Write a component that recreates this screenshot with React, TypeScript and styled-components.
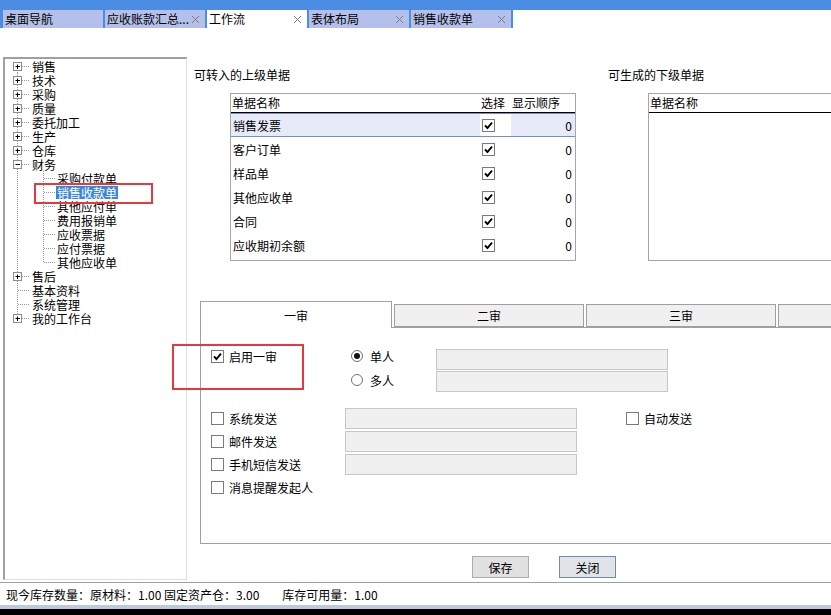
import React from 'react'
import styled, { createGlobalStyle } from 'styled-components'

const GlobalStyle = createGlobalStyle`
	html, body {
		margin: 0;
		padding: 0;
		background: #fff;
	}
	body {
		font-family: 'Noto Sans CJK SC', 'Noto Sans', sans-serif;
		font-size: 12px;
		color: #000;
	}
	* {
		box-sizing: border-box;
	}
`

type TreeItem = {
	label: string
	level: 0 | 1
	box?: 'plus' | 'minus'
	first?: boolean
	last?: boolean
	selected?: boolean
}

const treeItems: TreeItem[] = [
	{ label: '销售', level: 0, box: 'plus', first: true },
	{ label: '技术', level: 0, box: 'plus' },
	{ label: '采购', level: 0, box: 'plus' },
	{ label: '质量', level: 0, box: 'plus' },
	{ label: '委托加工', level: 0, box: 'plus' },
	{ label: '生产', level: 0, box: 'plus' },
	{ label: '仓库', level: 0, box: 'plus' },
	{ label: '财务', level: 0, box: 'minus' },
	{ label: '采购付款单', level: 1, first: true },
	{ label: '销售收款单', level: 1, selected: true },
	{ label: '其他应付单', level: 1 },
	{ label: '费用报销单', level: 1 },
	{ label: '应收票据', level: 1 },
	{ label: '应付票据', level: 1 },
	{ label: '其他应收单', level: 1, last: true },
	{ label: '售后', level: 0, box: 'plus' },
	{ label: '基本资料', level: 0 },
	{ label: '系统管理', level: 0 },
	{ label: '我的工作台', level: 0, box: 'plus', last: true },
]

const upstreamDocs = ['销售发票', '客户订单', '样品单', '其他应收单', '合同', '应收期初余额']

const docTabs = [
	{ label: '桌面导航', closable: false },
	{ label: '应收账款汇总...', closable: true },
	{ label: '工作流', closable: true, active: true },
	{ label: '表体布局', closable: true },
	{ label: '销售收款单', closable: true },
]

const DOT = '#9a9a9a'

const TreeGutter = ({ item }: { item: TreeItem }) => {
	if (item.level === 0) {
		return (
			<svg width="26" height="14" viewBox="0 0 26 14" style={{ flexShrink: 0 }}>
				<line
					x1="12.5"
					x2="12.5"
					y1={item.first ? 7 : 0}
					y2={item.last ? 7.5 : 14}
					stroke={DOT}
					strokeDasharray="1 1"
				/>
				<line x1="13" x2="25" y1="7.5" y2="7.5" stroke={DOT} strokeDasharray="1 1" />
				{item.box && (
					<g>
						<rect x="8.5" y="3.5" width="8" height="8" fill="#fff" stroke="#8c8c8c" />
						<line x1="10.5" x2="15" y1="7.5" y2="7.5" stroke="#000" />
						{item.box === 'plus' && <line x1="12.5" x2="12.5" y1="5.5" y2="10" stroke="#000" />}
					</g>
				)}
			</svg>
		)
	}
	return (
		<svg width="51" height="14" viewBox="0 0 51 14" style={{ flexShrink: 0 }}>
			<line x1="12.5" x2="12.5" y1="0" y2="14" stroke={DOT} strokeDasharray="1 1" />
			<line
				x1="38.5"
				x2="38.5"
				y1="0"
				y2={item.last ? 7.5 : 14}
				stroke={DOT}
				strokeDasharray="1 1"
			/>
			<line x1="39" x2="50" y1="7.5" y2="7.5" stroke={DOT} strokeDasharray="1 1" />
		</svg>
	)
}

const CheckMark = () => (
	<svg width="11" height="11" viewBox="0 0 11 11">
		<path d="M2 5.4 L4.4 8 L9 2.6" stroke="#000" strokeWidth="1.9" fill="none" />
	</svg>
)

const CloseGlyph = () => (
	<svg width="9" height="9" viewBox="0 0 9 9">
		<path d="M1 1 L8 8 M8 1 L1 8" stroke="#7c7c7c" strokeWidth="1" fill="none" />
	</svg>
)

const Check = ({ checked }: { checked?: boolean }) => <CheckBox>{checked && <CheckMark />}</CheckBox>

const App = () => {
	return (
		<Window>
			<GlobalStyle />
			<TopBar />
			<TabStrip>
				<TabTrack>
					{docTabs.map((t) => (
						<DocTab key={t.label} $active={!!t.active}>
							<span>{t.label}</span>
							{t.closable && <CloseGlyph />}
						</DocTab>
					))}
				</TabTrack>
			</TabStrip>

			<Body>
				<TreePanel>
					{treeItems.map((item) => (
						<TreeRow key={item.label}>
							<TreeGutter item={item} />
							<TreeLabel $selected={!!item.selected}>{item.label}</TreeLabel>
						</TreeRow>
					))}
				</TreePanel>

				<Main>
					<DocsRow>
						<DocSection $w={414}>
							<SectionTitle>可转入的上级单据</SectionTitle>
							<GridBox $w={346} $indent={36}>
								<HeadRow $cols="249px 31px 1fr">
									<HeadCell>单据名称</HeadCell>
									<HeadCell>选择</HeadCell>
									<HeadCell>显示顺序</HeadCell>
								</HeadRow>
								{upstreamDocs.map((name, i) => (
									<DataRow key={name} $cols="249px 31px 1fr" $selected={i === 0}>
										<Cell $tint={i === 0}>{name}</Cell>
										<Cell>
											<Check checked />
										</Cell>
										<Cell $tint={i === 0} $right>
											0
										</Cell>
									</DataRow>
								))}
							</GridBox>
						</DocSection>
						<DocSection $w={240}>
							<SectionTitle>可生成的下级单据</SectionTitle>
							<GridBox $w={200} $indent={40}>
								<HeadRow $cols="1fr">
									<HeadCell>单据名称</HeadCell>
								</HeadRow>
							</GridBox>
						</DocSection>
					</DocsRow>

					<TabControl>
						<TabList>
							<PageTab $active>一审</PageTab>
							<PageTab>二审</PageTab>
							<PageTab>三审</PageTab>
							<PageTab />
						</TabList>
						<TabPanel>
							<EnableBlock>
								<EnableCell>
									<Check checked />
									<span>启用一审</span>
								</EnableCell>
								<RadioGroup>
									<RadioItem>
										<RadioRing>
											<RadioDot />
										</RadioRing>
										<span>单人</span>
									</RadioItem>
									<RadioItem>
										<RadioRing />
										<span>多人</span>
									</RadioItem>
								</RadioGroup>
								<FieldStack>
									<Field $w={232} />
									<Field $w={232} />
								</FieldStack>
							</EnableBlock>

							<NotifyBlock>
								<NotifyRow>
									<CheckLabel>
										<Check />
										<span>系统发送</span>
									</CheckLabel>
									<Field $w={232} />
									<CheckLabel $gap={49}>
										<Check />
										<span>自动发送</span>
									</CheckLabel>
								</NotifyRow>
								<NotifyRow>
									<CheckLabel>
										<Check />
										<span>邮件发送</span>
									</CheckLabel>
									<Field $w={232} />
								</NotifyRow>
								<NotifyRow>
									<CheckLabel>
										<Check />
										<span>手机短信发送</span>
									</CheckLabel>
									<Field $w={232} />
								</NotifyRow>
								<NotifyRow>
									<CheckLabel>
										<Check />
										<span>消息提醒发起人</span>
									</CheckLabel>
								</NotifyRow>
							</NotifyBlock>
						</TabPanel>
					</TabControl>

					<ButtonRow>
						<PushButton>保存</PushButton>
						<PushButton $default>关闭</PushButton>
					</ButtonRow>
				</Main>
			</Body>

			<StatusBar>
				<span>现今库存数量：原材料：1.00 固定资产仓：3.00</span>
				<span>库存可用量：1.00</span>
			</StatusBar>
			<BottomStrip />
			<BlackBand />

			<Annotation $x={34} $y={183} $w={119} $h={21} />
			<Annotation $x={172} $y={344} $w={132} $h={46} />
		</Window>
	)
}

export default App

const Window = styled.div`
	position: relative;
	display: flex;
	flex-direction: column;
	width: 831px;
	height: 615px;
	overflow: hidden;
	background: #fff;
`

const TopBar = styled.div`
	height: 10px;
	flex-shrink: 0;
	background: #4a8de3;
`

const TabStrip = styled.div`
	display: flex;
	height: 18px;
	flex-shrink: 0;
`

const TabTrack = styled.div`
	display: flex;
	gap: 2px;
	padding: 0 2px 0 3px;
	background: #4a8de3;
`

const DocTab = styled.div<{ $active: boolean }>`
	display: flex;
	justify-content: space-between;
	align-items: center;
	width: 100px;
	height: 18px;
	padding: 0 5px 0 2px;

	background: ${(p) => (p.$active ? '#fff' : '#b5c0ea')};
	font-size: 12px;
	line-height: 18px;
	white-space: nowrap;
	overflow: hidden;
`

const Body = styled.div`
	display: flex;
	flex: 1;
	min-height: 0;
`

const TreePanel = styled.div`
	display: flex;
	flex-direction: column;
	flex-shrink: 0;
	width: 184px;
	margin: 29px 0 2px 3px;

	border-top: 2px solid #a0a0a0;
	border-left: 2px solid #a0a0a0;
	border-right: 1px solid #dedede;
	border-bottom: 1px solid #dedede;
	overflow: hidden;
`

const TreeRow = styled.div`
	display: flex;
	align-items: center;
	height: 14px;
	flex-shrink: 0;
`

const TreeLabel = styled.span<{ $selected: boolean }>`
	height: 13px;
	padding: 0 1px;
	line-height: 13px;
	white-space: nowrap;

	background: ${(p) => (p.$selected ? '#3a87da' : 'transparent')};
	color: ${(p) => (p.$selected ? '#fff' : '#000')};
`

const Main = styled.div`
	display: flex;
	flex-direction: column;
	flex: 1;
	min-width: 0;
	padding-left: 7px;
	overflow: hidden;
`

const DocsRow = styled.div`
	display: flex;
	margin-top: 40px;
`

const DocSection = styled.div<{ $w: number }>`
	display: flex;
	flex-direction: column;
	flex-shrink: 0;
	width: ${(p) => p.$w}px;
`

const SectionTitle = styled.div`
	height: 14px;
	line-height: 14px;
	white-space: nowrap;
`

const GridBox = styled.div<{ $w: number; $indent: number }>`
	display: flex;
	flex-direction: column;
	flex-shrink: 0;
	width: ${(p) => p.$w}px;
	height: 168px;
	margin: 11px 0 0 ${(p) => p.$indent}px;

	border: 1px solid #a6a6a6;
	background: #fff;
`

const HeadRow = styled.div<{ $cols: string }>`
	display: grid;
	grid-template-columns: ${(p) => p.$cols};
	height: 19px;
	flex-shrink: 0;
	border-bottom: 1px solid #000;
`

const HeadCell = styled.div`
	padding-left: 1px;
	line-height: 18px;
	white-space: nowrap;
`

const DataRow = styled.div<{ $cols: string; $selected: boolean }>`
	display: grid;
	grid-template-columns: ${(p) => p.$cols};
	height: 24px;
	flex-shrink: 0;
	box-shadow: ${(p) => (p.$selected ? 'inset 0 0 0 1px #6f92bf' : 'none')};
`

const Cell = styled.div<{ $tint?: boolean; $right?: boolean }>`
	display: flex;
	align-items: center;
	justify-content: ${(p) => (p.$right ? 'flex-end' : 'flex-start')};
	padding: ${(p) => (p.$right ? '0 3px 0 0' : '0 0 0 2px')};
	margin: 1px 0;

	background: ${(p) => (p.$tint ? '#e7ebf9' : 'transparent')};
	white-space: nowrap;
`

const CheckBox = styled.span`
	display: inline-flex;
	justify-content: center;
	align-items: center;
	flex-shrink: 0;
	width: 13px;
	height: 13px;

	border: 1px solid #7a7a7a;
	background: #fff;
`

const TabControl = styled.div`
	display: flex;
	flex-direction: column;
	flex-shrink: 0;
	width: 700px;
	margin: 40px 0 0 6px;
`

const TabList = styled.div`
	display: flex;
	align-items: flex-end;
	gap: 2px;
	height: 26px;
`

const PageTab = styled.div<{ $active?: boolean }>`
	display: flex;
	justify-content: center;
	align-items: center;
	flex-shrink: 0;
	width: ${(p) => (p.$active ? 192 : 190)}px;
	height: ${(p) => (p.$active ? 27 : 23)}px;
	margin-bottom: ${(p) => (p.$active ? -1 : 0)}px;
	position: relative;
	z-index: ${(p) => (p.$active ? 1 : 0)};

	border: 1px solid #a0a0a0;
	border-bottom: ${(p) => (p.$active ? 'none' : '1px solid #a0a0a0')};
	background: ${(p) => (p.$active ? '#fff' : '#f0f0f0')};
`

const TabPanel = styled.div`
	display: flex;
	flex-direction: column;
	height: 217px;
	padding: 16px 0 0 10px;
	border: 1px solid #a0a0a0;
	background: #fff;
`

const EnableBlock = styled.div`
	display: flex;
`

const EnableCell = styled.div`
	display: flex;
	align-items: center;
	gap: 5px;
	width: 140px;
	height: 24px;
`

const RadioGroup = styled.div`
	display: flex;
	flex-direction: column;
	width: 85px;
`

const RadioItem = styled.div`
	display: flex;
	align-items: center;
	gap: 7px;
	height: 24px;
`

const RadioRing = styled.span`
	display: inline-flex;
	justify-content: center;
	align-items: center;
	width: 12px;
	height: 12px;
	border: 1px solid #707070;
	border-radius: 50%;
	background: #fff;
`

const RadioDot = styled.span`
	width: 6px;
	height: 6px;
	border-radius: 50%;
	background: #111;
`

const FieldStack = styled.div`
	display: flex;
	flex-direction: column;
	gap: 1px;
	margin-top: 5px;
`

const Field = styled.div<{ $w: number }>`
	width: ${(p) => p.$w}px;
	height: 21px;
	flex-shrink: 0;
	border: 1px solid #c6c6c6;
	background: #f0f0f0;
`

const NotifyBlock = styled.div`
	display: flex;
	flex-direction: column;
	margin-top: 15px;
`

const NotifyRow = styled.div`
	display: flex;
	align-items: center;
	height: 23px;
`

const CheckLabel = styled.div<{ $gap?: number }>`
	display: flex;
	align-items: center;
	gap: 5px;
	width: ${(p) => (p.$gap ? 'auto' : '134px')};
	margin-left: ${(p) => p.$gap ?? 0}px;
	white-space: nowrap;
`

const ButtonRow = styled.div`
	display: flex;
	gap: 30px;
	margin: 12px 0 0 278px;
`

const PushButton = styled.button<{ $default?: boolean }>`
	width: 57px;
	height: 22px;
	padding: 0;

	font-family: inherit;
	font-size: 12px;
	color: #000;
	background: ${(p) => (p.$default ? '#e0e4e9' : '#e1e1e1')};
	border: 1px solid ${(p) => (p.$default ? '#6f8ba6' : '#adadad')};
`

const StatusBar = styled.div`
	display: flex;
	align-items: center;
	gap: 23px;
	height: 23px;
	flex-shrink: 0;
	padding-left: 6px;

	border-top: 1px solid #a0a0a0;
	background: #fff;
	white-space: nowrap;
`

const BottomStrip = styled.div`
	height: 4px;
	flex-shrink: 0;
	background: #bccadc;
`

const BlackBand = styled.div`
	height: 6px;
	flex-shrink: 0;
	background: #000;
`

const Annotation = styled.div<{ $x: number; $y: number; $w: number; $h: number }>`
	position: absolute;
	left: ${(p) => p.$x}px;
	top: ${(p) => p.$y}px;
	width: ${(p) => p.$w}px;
	height: ${(p) => p.$h}px;
	border: 2px solid #e3393f;
	pointer-events: none;
`
